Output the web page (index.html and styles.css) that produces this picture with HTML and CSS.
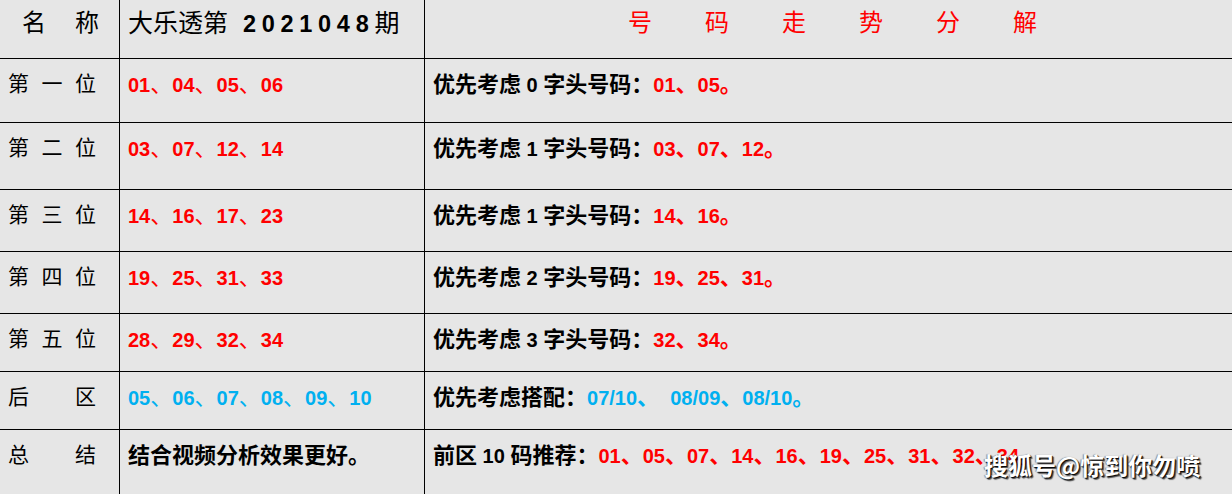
FILE: index.html
```html
<!DOCTYPE html>
<html lang="zh-CN">
<head>
<meta charset="utf-8">
<title>大乐透第2021048期 号码走势分解</title>
<link rel="stylesheet" href="styles.css">
</head>
<body>
<div class="sheet">
  <div class="c c1 hd"><span class="lbl lbl-hd"><span>名</span><span>称</span></span></div>
  <div class="c c2 hd"><span class="issue">大乐透第</span><b class="yr">2021048</b><span class="issue">期</span></div>
  <div class="c c3 hd"><div class="title"><span>号</span><span>码</span><span>走</span><span>势</span><span>分</span><span>解</span></div></div>

  <div class="c c1"><span class="lbl"><span>第</span><span>一</span><span>位</span></span></div>
  <div class="c c2 red"><span class="n">01</span>、<span class="n">04</span>、<span class="n">05</span>、<span class="n">06</span></div>
  <div class="c c3 b">优先考虑<span class="n"> 0 </span>字头号码：<span class="red"><span class="n">01</span>、<span class="n">05</span>。</span></div>

  <div class="c c1"><span class="lbl"><span>第</span><span>二</span><span>位</span></span></div>
  <div class="c c2 red"><span class="n">03</span>、<span class="n">07</span>、<span class="n">12</span>、<span class="n">14</span></div>
  <div class="c c3 b">优先考虑<span class="n"> 1 </span>字头号码：<span class="red"><span class="n">03</span>、<span class="n">07</span>、<span class="n">12</span>。</span></div>

  <div class="c c1"><span class="lbl"><span>第</span><span>三</span><span>位</span></span></div>
  <div class="c c2 red"><span class="n">14</span>、<span class="n">16</span>、<span class="n">17</span>、<span class="n">23</span></div>
  <div class="c c3 b">优先考虑<span class="n"> 1 </span>字头号码：<span class="red"><span class="n">14</span>、<span class="n">16</span>。</span></div>

  <div class="c c1"><span class="lbl"><span>第</span><span>四</span><span>位</span></span></div>
  <div class="c c2 red"><span class="n">19</span>、<span class="n">25</span>、<span class="n">31</span>、<span class="n">33</span></div>
  <div class="c c3 b">优先考虑<span class="n"> 2 </span>字头号码：<span class="red"><span class="n">19</span>、<span class="n">25</span>、<span class="n">31</span>。</span></div>

  <div class="c c1"><span class="lbl"><span>第</span><span>五</span><span>位</span></span></div>
  <div class="c c2 red"><span class="n">28</span>、<span class="n">29</span>、<span class="n">32</span>、<span class="n">34</span></div>
  <div class="c c3 b">优先考虑<span class="n"> 3 </span>字头号码：<span class="red"><span class="n">32</span>、<span class="n">34</span>。</span></div>

  <div class="c c1"><span class="lbl"><span>后</span><span>区</span></span></div>
  <div class="c c2 blue"><span class="n">05</span>、<span class="n">06</span>、<span class="n">07</span>、<span class="n">08</span>、<span class="n">09</span>、<span class="n">10</span></div>
  <div class="c c3 b">优先考虑搭配：<span class="blue"><span class="n">07/10</span>、<span class="n"> &nbsp;08/09</span>、<span class="n">08/10</span>。</span></div>

  <div class="c c1 last"><span class="lbl"><span>总</span><span>结</span></span></div>
  <div class="c c2 b last">结合视频分析效果更好。</div>
  <div class="c c3 b last">前区<span class="n"> 10 </span>码推荐：<span class="red"><span class="n">01</span>、<span class="n">05</span>、<span class="n">07</span>、<span class="n">14</span>、<span class="n">16</span>、<span class="n">19</span>、<span class="n">25</span>、<span class="n">31</span>、<span class="n">32</span>、<span class="n">34</span>。</span></div>
</div>
<div class="wm">搜狐号@惊到你勿喷</div>
</body>
</html>
```

FILE: styles.css
```css
html, body {
  margin: 0;
  padding: 0;
  overflow: hidden;
  background: #e6e6e6;
}

.sheet {
  display: grid;
  grid-template-columns: 120px 305px 1fr;
  grid-template-rows: 59px 64px 67px 62px 62px 58px 58px 64px;
  font-family: "Noto Sans CJK SC", sans-serif;
  font-size: 22px;
  color: #000;
  background: #e6e6e6;
}

.c {
  box-sizing: border-box;
  border-bottom: 1px solid #000;
  padding: 11px 0 0 8px;
  line-height: 24px;
  white-space: nowrap;
}

.c1, .c2 {
  border-right: 1px solid #000;
}

.last {
  border-bottom: none;
}

.hd {
  padding-top: 6px;
  line-height: 30px;
}

.lbl {
  display: flex;
  justify-content: space-between;
  width: 88px;
  font-size: 21px;
}

.lbl-hd {
  width: 77px;
  margin-left: 14px;
  font-size: 24px;
}

.issue {
  font-size: 25px;
}

.yr {
  font-family: "Liberation Sans", sans-serif;
  font-weight: 700;
  font-size: 23.5px;
  letter-spacing: 5.7px;
  margin-left: 15px;
}

.title {
  display: flex;
  justify-content: center;
  gap: 53px;
  color: #ff0000;
  font-size: 24px;
  font-weight: 400;
}

.n {
  font-family: "Liberation Sans", sans-serif;
  font-weight: 700;
  font-size: 20px;
}

.b {
  font-weight: 700;
}

.red {
  color: #ff0000;
}

.blue {
  color: #00b0f0;
}

.wm {
  position: absolute;
  left: 984px;
  top: 449px;
  font-family: "Noto Sans CJK SC", sans-serif;
  font-size: 24px;
  font-weight: 700;
  line-height: 32px;
  color: #fff;
  text-shadow: 1px 1px 1px #000, 2px 2px 1px rgba(0,0,0,0.6), -1px 0 1px rgba(0,0,0,0.4);
}
```
